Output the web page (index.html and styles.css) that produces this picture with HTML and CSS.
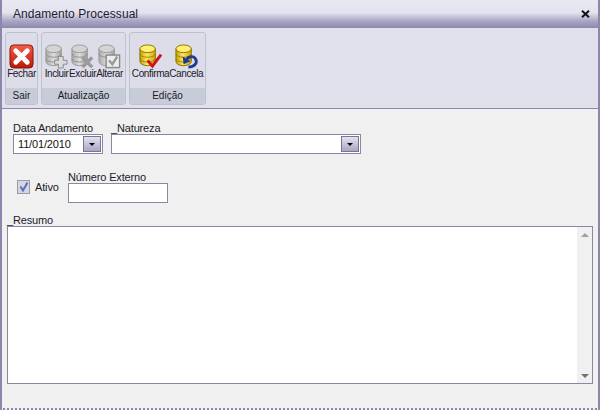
FILE: index.html
```html
<!DOCTYPE html>
<html lang="pt">
<head>
<meta charset="utf-8">
<title>Andamento Processual</title>
<link rel="stylesheet" href="styles.css">
</head>
<body>
<div class="window">
  <header class="titlebar">
    <span class="title">Andamento Processual</span>
    <svg class="close" width="9" height="8" viewBox="0 0 9 8"><path d="M1 0.8 L8 7.2 M8 0.8 L1 7.2" stroke="#111" stroke-width="2" fill="none"/></svg>
  </header>
  <div class="toolbar">
    <section class="group group-sair">
      <div class="tools">
        <div class="tool">
          <svg class="icon" viewBox="0 0 26 26">
            <defs><linearGradient id="red" x1="0" y1="0" x2="0" y2="1"><stop offset="0" stop-color="#f0604a"/><stop offset="1" stop-color="#b81808"/></linearGradient></defs>
            <rect x="1" y="1" width="24" height="24" rx="4" fill="url(#red)" stroke="#8c1408"/>
            <path d="M7 7 L19 19 M19 7 L7 19" stroke="#fff" stroke-width="5" stroke-linecap="round"/>
          </svg>
          <span>Fechar</span>
        </div>
      </div>
      <footer class="group-name">Sair</footer>
    </section>
    <section class="group group-atual">
      <div class="tools">
        <div class="tool">
          <svg class="icon" viewBox="0 0 26 26">
            <defs><linearGradient id="gray" x1="0" y1="0" x2="1" y2="0"><stop offset="0" stop-color="#a8a8a8"/><stop offset=".5" stop-color="#dedede"/><stop offset="1" stop-color="#a0a0a0"/></linearGradient></defs>
            <path d="M2 5 V18 C2 24 18 24 18 18 V5 Z" fill="url(#gray)" stroke="#999"/>
            <ellipse cx="10" cy="5" rx="8" ry="4" fill="#d4d4d4" stroke="#999"/>
            <path d="M2 10 C2 15 18 15 18 10 M2 15 C2 20 18 20 18 15" fill="none" stroke="#8f8f8f"/>
            <path d="M15 13 H20 V17 H24 V21 H20 V25 H15 V21 H11 V17 H15 Z" fill="#dcdcdc" stroke="#8a8a8a"/>
          </svg>
          <span>Incluir</span>
        </div>
        <div class="tool">
          <svg class="icon" viewBox="0 0 26 26">
            <path d="M2 5 V18 C2 24 18 24 18 18 V5 Z" fill="url(#gray)" stroke="#999"/>
            <ellipse cx="10" cy="5" rx="8" ry="4" fill="#d4d4d4" stroke="#999"/>
            <path d="M2 10 C2 15 18 15 18 10 M2 15 C2 20 18 20 18 15" fill="none" stroke="#8f8f8f"/>
            <path d="M13 14 L23 24 M23 14 L13 24" stroke="#9a9a9a" stroke-width="3.5"/>
          </svg>
          <span>Excluir</span>
        </div>
        <div class="tool">
          <svg class="icon" viewBox="0 0 26 26">
            <path d="M2 5 V18 C2 24 18 24 18 18 V5 Z" fill="url(#gray)" stroke="#999"/>
            <ellipse cx="10" cy="5" rx="8" ry="4" fill="#d4d4d4" stroke="#999"/>
            <path d="M2 10 C2 15 18 15 18 10" fill="none" stroke="#8f8f8f"/>
            <rect x="9.5" y="11.5" width="14" height="13" fill="#ececec" stroke="#8a8a8a" stroke-width="1.5"/>
            <path d="M12.5 17 L16 21 L21 13" fill="none" stroke="#9a9a9a" stroke-width="2.5"/>
          </svg>
          <span>Alterar</span>
        </div>
      </div>
      <footer class="group-name">Atualização</footer>
    </section>
    <section class="group group-edit">
      <div class="tools">
        <div class="tool">
          <svg class="icon" viewBox="0 0 26 26">
            <defs><linearGradient id="gold" x1="0" y1="0" x2="1" y2="0"><stop offset="0" stop-color="#c49a08"/><stop offset=".45" stop-color="#ffe860"/><stop offset="1" stop-color="#d0a008"/></linearGradient></defs>
            <path d="M2 5 V18 C2 24 18 24 18 18 V5 Z" fill="url(#gold)" stroke="#8a7000"/>
            <ellipse cx="10" cy="5" rx="8" ry="4" fill="#fff070" stroke="#8a7000"/>
            <path d="M2 10 C2 15 18 15 18 10 M2 15 C2 20 18 20 18 15" fill="none" stroke="#a08400"/>
            <path d="M10 17 L15 23 L24 11" fill="none" stroke="#d0141c" stroke-width="3"/>
          </svg>
          <span>Confirma</span>
        </div>
        <div class="tool">
          <svg class="icon" viewBox="0 0 26 26">
            <path d="M2 5 V18 C2 24 18 24 18 18 V5 Z" fill="url(#gold)" stroke="#8a7000"/>
            <ellipse cx="10" cy="5" rx="8" ry="4" fill="#fff070" stroke="#8a7000"/>
            <path d="M2 10 C2 15 18 15 18 10 M2 15 C2 20 18 20 18 15" fill="none" stroke="#a08400"/>
            <path d="M15 24 C22 24 25 19 22 15 C20 12 15 13 13 16" fill="none" stroke="#1c3c94" stroke-width="3"/>
            <path d="M9 13 L10 21 L17 18 Z" fill="#1c3c94"/>
          </svg>
          <span>Cancela</span>
        </div>
      </div>
      <footer class="group-name">Edição</footer>
    </section>
  </div>
  <main class="form">
    <div class="row row-top">
      <div class="field field-date">
        <label class="label">Data Andamento</label>
        <div class="input combo combo-date">
          <span class="value">11/01/2010</span>
          <span class="drop"><i class="arrow"></i></span>
        </div>
      </div>
      <div class="field field-nature">
        <label class="label">_Natureza</label>
        <div class="input combo combo-nature">
          <span class="value"></span>
          <span class="drop"><i class="arrow"></i></span>
        </div>
      </div>
    </div>
    <div class="row row-mid">
      <div class="check">
        <span class="box">
          <svg width="10" height="10" viewBox="0 0 10 10"><path d="M1.5 4.5 L4 8.5 L8.5 0.5" fill="none" stroke="#5f70b8" stroke-width="2"/></svg>
        </span>
        <span class="check-label">Ativo</span>
      </div>
      <div class="field field-ext">
        <label class="label">Número Externo</label>
        <div class="input input-ext"></div>
      </div>
    </div>
    <div class="field field-memo">
      <label class="label">_Resumo</label>
      <div class="input memo">
        <div class="scrollbar">
          <i class="sb-up"></i>
          <i class="sb-down"></i>
        </div>
      </div>
    </div>
  </main>
</div>
</body>
</html>
```

FILE: styles.css
```css
* { box-sizing: border-box; }
html, body { margin: 0; padding: 0; }
body {
  width: 600px;
  height: 410px;
  overflow: hidden;
  font-family: "Liberation Sans", Arial, sans-serif;
  font-size: 11px;
  letter-spacing: -0.15px;
  color: #1a1a2a;
}
.window {
  width: 600px;
  height: 410px;
  display: flex;
  flex-direction: column;
  background: #f0f0f0;
  border-left: 2px solid #8a87ab;
  border-right: 2px solid #8a87ab;
  border-bottom: 2px dotted #8a87ab;
}
.titlebar {
  height: 28px;
  flex: none;
  display: flex;
  align-items: center;
  justify-content: space-between;
  padding: 0 8px 0 11px;
  background: linear-gradient(#e9e9f3 0, #e3e3ef 45%, #a8a6c4 75%, #8c89ad 100%);
}
.title { font-size: 12px; letter-spacing: 0.05px; color: #1c1c30; }
.close { display: block; }
.toolbar {
  height: 81px;
  flex: none;
  display: flex;
  gap: 3px;
  padding: 4px 0 0 3px;
  background: #e0e0ec;
  border-bottom: 1px solid #8a87ab;
}
.group {
  height: 73px;
  display: flex;
  flex-direction: column;
  border: 1px solid #bfc1cd;
  border-radius: 3px;
  background: #dddde9;
  overflow: hidden;
}
.group-sair { width: 33px; }
.group-atual { width: 85px; }
.group-edit { width: 77px; }
.tools {
  flex: 1;
  display: flex;
  justify-content: center;
}
.tool {
  display: flex;
  flex-direction: column;
  align-items: center;
  padding-top: 11px;
  font-size: 10px;
  letter-spacing: -0.4px;
  white-space: nowrap;
}
.icon { display: block; flex: none; width: 25px; height: 25px; margin-bottom: -2px; }
.tool span { line-height: 14px; }
.group-name {
  height: 16px;
  flex: none;
  text-align: center;
  font-size: 10px;
  letter-spacing: 0;
  line-height: 15px;
  background: #c8ccd8;
}
.form {
  flex: 1;
  display: flex;
  flex-direction: column;
  padding: 12px 6px 0 5px;
}
.row { display: flex; }
.row-top { padding-left: 6px; gap: 8px; }
.row-mid { padding: 16px 0 0 10px; align-items: flex-end; }
.field { display: flex; flex-direction: column; }
.label { line-height: 15px; height: 13px; white-space: nowrap; }
.input {
  background: #fff;
  border: 1px solid #8a87a4;
}
.combo {
  height: 20px;
  display: flex;
  align-items: center;
  justify-content: space-between;
  padding: 0 1px 0 4px;
}
.combo-date { width: 90px; }
.combo-nature { width: 250px; }
.value { color: #111; }
.drop {
  width: 18px;
  height: 16px;
  display: flex;
  align-items: center;
  justify-content: center;
  border: 1px solid #777592;
  background: linear-gradient(#e2e2ee, #a9a7c3);
}
.arrow {
  width: 0;
  height: 0;
  border-left: 3px solid transparent;
  border-right: 3px solid transparent;
  border-top: 3px solid #000;
}
.check {
  display: flex;
  align-items: center;
  gap: 5px;
  margin-bottom: 9px;
  width: 51px;
}
.box {
  width: 13px;
  height: 14px;
  display: flex;
  align-items: center;
  justify-content: center;
  background: #d6d6e0;
  border: 1px solid #9a9aa8;
}
.input-ext { width: 100px; height: 20px; }
.field-memo { flex: none; margin-top: 10px; }
.memo {
  width: 586px;
  height: 158px;
  display: flex;
  justify-content: flex-end;
}
.scrollbar {
  width: 15px;
  display: flex;
  flex-direction: column;
  justify-content: space-between;
  align-items: center;
  padding: 6px 0 5px;
  background: #f0f0f0;
}
.sb-up, .sb-down {
  width: 0;
  height: 0;
  border-left: 4px solid transparent;
  border-right: 4px solid transparent;
}
.sb-up { border-bottom: 4px solid #a0a0a0; }
.sb-down { border-top: 4px solid #707070; }
```
